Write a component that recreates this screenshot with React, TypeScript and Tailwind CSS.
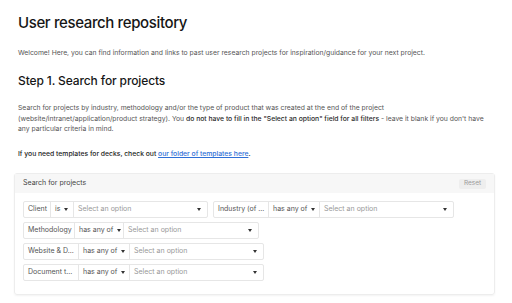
type Filter = {
  field: string
  op: string
  fieldW: string
  opW: string
  selectW: string
}

const rows: Filter[][] = [
  [
    { field: 'Client', op: 'is', fieldW: 'w-[27px]', opW: 'w-[23px]', selectW: 'w-[133px]' },
    { field: 'Industry (of ...', op: 'has any of', fieldW: 'w-[55px]', opW: 'w-[51px]', selectW: 'w-[133px]' },
  ],
  [{ field: 'Methodology', op: 'has any of', fieldW: 'w-[51px]', opW: 'w-[49px]', selectW: 'w-[134px]' }],
  [{ field: 'Website & D...', op: 'has any of', fieldW: 'w-[55px]', opW: 'w-[51px]', selectW: 'w-[133px]' }],
  [{ field: 'Document t...', op: 'has any of', fieldW: 'w-[55px]', opW: 'w-[51px]', selectW: 'w-[133px]' }],
]

function Caret() {
  return <span className="ml-[4px] inline-block border-x-[2px] border-t-[3px] border-x-transparent border-t-[#333]" />
}

function FilterChip({ f }: { f: Filter }) {
  return (
    <div className="flex h-[17px] items-stretch rounded-[2px] border border-[#e6e6e6] bg-white text-[7px] whitespace-nowrap text-[#555]">
      <div className={`${f.fieldW} flex items-center overflow-hidden border-r border-[#e6e6e6] px-[4px]`}>{f.field}</div>
      <div className={`${f.opW} flex items-center border-r border-[#e6e6e6] px-[4px]`}>
        {f.op}
        <Caret />
      </div>
      <div className={`${f.selectW} flex items-center justify-between pr-[6px] pl-[4px] text-[#999]`}>
        Select an option
        <Caret />
      </div>
    </div>
  )
}

export default function App() {
  return (
    <div className="h-[303px] w-[512px] overflow-hidden bg-white pl-[18px] font-['Inter',sans-serif]">
      <h1 className="pt-[12px] text-[15px] leading-[22px] font-medium tracking-[-0.025em] text-[#161616]">
        User research repository
      </h1>
      <p className="mt-[14px] text-[6.8px] leading-[10px] whitespace-nowrap text-[#555]">
        Welcome! Here, you can find information and links to past user research projects for inspiration/guidance for your next project.
      </p>
      <h2 className="mt-[14px] text-[12px] leading-[18px] font-medium tracking-[-0.01em] text-[#161616]">
        Step 1. Search for projects
      </h2>
      <p className="mt-[13px] w-[476px] text-[6.8px] leading-[10.5px] text-[#555]">
        Search for projects by industry, methodology and/or the type of product that was created at the end of the project (website/intranet/application/product strategy). You{' '}
        <span className="font-medium text-[#2a2a2a]">do not have to fill in the "Select an option" field for all filters</span>{' '}
        - leave it blank if you don't have any particular criteria in mind.
      </p>
      <p className="mt-[14.5px] text-[6.8px] leading-[10px] font-medium whitespace-nowrap text-[#222]">
        If you need templates for decks, check out{' '}
        <a className="text-[#2f6fd6] underline">our folder of templates here</a>.
      </p>

      <section className="mt-[14px] -ml-[4px] w-[481px] rounded-[3px] border border-[#ededed] shadow-[0_1px_2px_rgba(0,0,0,0.05)]">
        <div className="flex h-[19px] items-center justify-between bg-[#f7f7f7] pr-[8px] pl-[8px]">
          <span className="text-[7px] text-[#444]">Search for projects</span>
          <span className="flex h-[10px] w-[27px] items-center justify-center rounded-[2px] bg-[#eeeeee] text-[6.5px] text-[#9a9a9a]">
            Reset
          </span>
        </div>
        <div className="flex flex-col gap-[4px] px-[8px] pt-[8px] pb-[13px]">
          {rows.map((row, i) => (
            <div key={i} className="flex gap-[5px]">
              {row.map((f) => (
                <FilterChip key={f.field} f={f} />
              ))}
            </div>
          ))}
        </div>
      </section>
    </div>
  )
}
